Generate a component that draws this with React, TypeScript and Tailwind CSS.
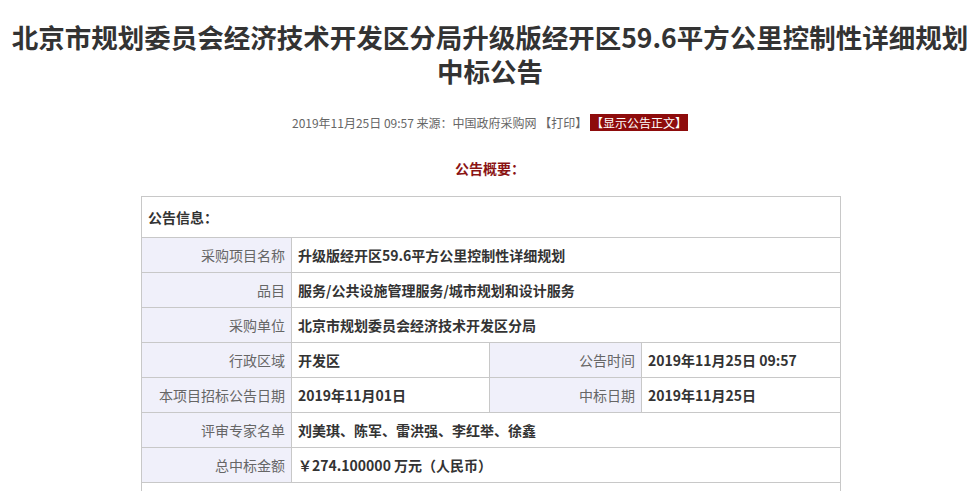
const rows: { label: string; value: string }[] = [
  { label: '采购项目名称', value: '升级版经开区59.6平方公里控制性详细规划' },
  { label: '品目', value: '服务/公共设施管理服务/城市规划和设计服务' },
  { label: '采购单位', value: '北京市规划委员会经济技术开发区分局' },
];

const tail: { label: string; value: string }[] = [
  { label: '评审专家名单', value: '刘美琪、陈军、雷洪强、李红举、徐鑫' },
  { label: '总中标金额', value: '￥274.100000 万元（人民币）' },
];

const labelCls = 'border border-[#c8c8c8] bg-[#f0f0fa] text-right pr-[6px] font-normal text-[#666] h-[35px]';
const valueCls = 'border border-[#c8c8c8] text-left pl-[6px] font-bold text-[#333] h-[35px]';

export default function App() {
  return (
    <div className="w-[980px] h-[491px] overflow-hidden bg-white font-['Microsoft_YaHei','Noto_Sans_CJK_SC',sans-serif]">
      <h1 className="pt-[20px] text-center text-[26.5px] leading-[34px] font-bold text-[#333]">
        <div>北京市规划委员会经济技术开发区分局升级版经开区59.6平方公里控制性详细规划</div>
        <div>中标公告</div>
      </h1>

      <div className="mt-[25px] text-center text-[12px] leading-[20px] text-[#666]">
        2019年11月25日 09:57 来源：中国政府采购网 【打印】{' '}
        <span className="bg-[#8e0c0c] text-white px-[1px]">【显示公告正文】</span>
      </div>

      <div className="mt-[25px] text-center text-[14px] leading-[20px] font-bold text-[#8b1414]">公告概要：</div>

      <table className="mt-[18px] ml-[141px] w-[699px] table-fixed border-collapse text-[14px] leading-[20px]">
        <colgroup>
          <col className="w-[150px]" />
          <col className="w-[198px]" />
          <col className="w-[152px]" />
          <col className="w-[199px]" />
        </colgroup>
        <tbody>
          <tr>
            <td colSpan={4} className="border border-[#c8c8c8] h-[41px] pl-[6px] font-bold text-[#333]">
              公告信息：
            </td>
          </tr>
          {rows.map((r) => (
            <tr key={r.label}>
              <td className={labelCls}>{r.label}</td>
              <td colSpan={3} className={valueCls}>{r.value}</td>
            </tr>
          ))}
          <tr>
            <td className={labelCls}>行政区域</td>
            <td className={valueCls}>开发区</td>
            <td className={labelCls}>公告时间</td>
            <td className={valueCls}>2019年11月25日 09:57</td>
          </tr>
          <tr>
            <td className={labelCls}>本项目招标公告日期</td>
            <td className={valueCls}>2019年11月01日</td>
            <td className={labelCls}>中标日期</td>
            <td className={valueCls}>2019年11月25日</td>
          </tr>
          {tail.map((r) => (
            <tr key={r.label}>
              <td className={labelCls}>{r.label}</td>
              <td colSpan={3} className={valueCls}>{r.value}</td>
            </tr>
          ))}
          <tr>
            <td colSpan={4} className="border border-[#c8c8c8] h-[35px]"></td>
          </tr>
        </tbody>
      </table>
    </div>
  );
}
